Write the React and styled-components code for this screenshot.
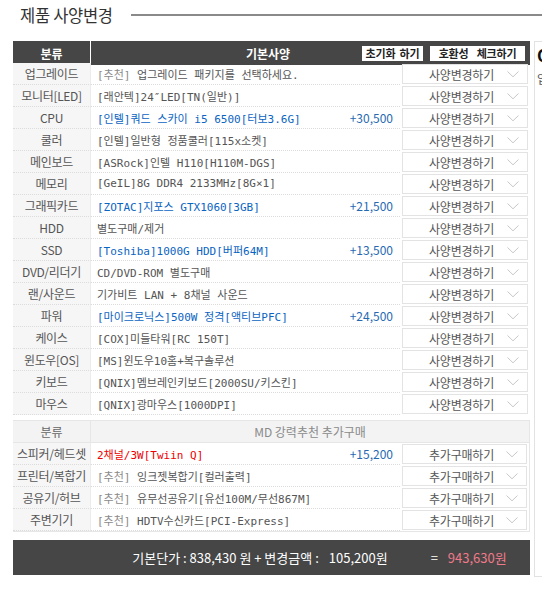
import styled, { createGlobalStyle } from "styled-components";

const GlobalStyle = createGlobalStyle`
    html, body {
        margin: 0;
        padding: 0;
        background: #fff;
        overflow: hidden;
    }
    body {
        font-family: "Noto Sans CJK KR", "Noto Sans", sans-serif;
        font-size: 12px;
        color: #555;
    }
`;

const specs = [
    { label: '업그레이드', rec: true, text: '업그레이드 패키지를 선택하세요.' },
    { label: '모니터[LED]', text: '[래안텍]24″LED[TN(일반)]' },
    { label: 'CPU', text: '[인텔]쿼드 스카이 i5 6500[터보3.6G]', tone: 'blue', price: '+30,500' },
    { label: '쿨러', text: '[인텔]일반형 정품쿨러[115x소켓]' },
    { label: '메인보드', text: '[ASRock]인텔 H110[H110M-DGS]' },
    { label: '메모리', text: '[GeIL]8G DDR4 2133MHz[8G×1]' },
    { label: '그래픽카드', text: '[ZOTAC]지포스 GTX1060[3GB]', tone: 'blue', price: '+21,500' },
    { label: 'HDD', text: '별도구매/제거' },
    { label: 'SSD', text: '[Toshiba]1000G HDD[버퍼64M]', tone: 'blue', price: '+13,500' },
    { label: 'DVD/리더기', text: 'CD/DVD-ROM 별도구매' },
    { label: '랜/사운드', text: '기가비트 LAN + 8채널 사운드' },
    { label: '파워', text: '[마이크로닉스]500W 정격[액티브PFC]', tone: 'blue', price: '+24,500' },
    { label: '케이스', text: '[COX]미들타워[RC 150T]' },
    { label: '윈도우[OS]', text: '[MS]윈도우10홈+복구솔루션' },
    { label: '키보드', text: '[QNIX]멤브레인키보드[2000SU/키스킨]' },
    { label: '마우스', text: '[QNIX]광마우스[1000DPI]' },
];

const extras = [
    { label: '스피커/헤드셋', text: '2채널/3W[Twiin Q]', tone: 'red', price: '+15,200' },
    { label: '프린터/복합기', rec: true, text: '잉크젯복합기[컬러출력]' },
    { label: '공유기/허브', rec: true, text: '유무선공유기[유선100M/무선867M]' },
    { label: '주변기기', rec: true, text: 'HDTV수신카드[PCI-Express]' },
];

const Chevron = () => (
    <svg width="12" height="7" viewBox="0 0 12 7" fill="none">
        <path d="M0.5 0.5 L6 5.8 L11.5 0.5" stroke="#c8c8c8" strokeWidth="1" />
    </svg>
);

const Row = ({ item, action }) => (
    <>
        <LabelCell>{item.label}</LabelCell>
        <SpecCell>
            <SpecText $tone={item.tone}>
                {item.rec && <Rec>[추천] </Rec>}
                {item.text}
            </SpecText>
            {item.price && <Price>{item.price}</Price>}
        </SpecCell>
        <SelectCell>
            <SelectBox>
                <span>{action}</span>
                <Chevron />
            </SelectBox>
        </SelectCell>
    </>
);

export default function App() {
    return (
        <Page>
            <GlobalStyle />
            <Main>
                <TitleBar>
                    <Title>제품 사양변경</Title>
                    <TitleLine />
                </TitleBar>
                <Table>
                    <HeadCell>분류</HeadCell>
                    <HeadMain>
                        <HeadTitle>기본사양</HeadTitle>
                        <HeadButton $w={61}>초기화 하기</HeadButton>
                        <HeadButton $w={95} $wide>호환성 체크하기</HeadButton>
                    </HeadMain>
                    {specs.map((s) => (
                        <Row key={s.label} item={s} action="사양변경하기" />
                    ))}
                </Table>
                <ExtraTable>
                    <SubHead>분류</SubHead>
                    <SubHeadMain>MD 강력추천 추가구매</SubHeadMain>
                    {extras.map((s) => (
                        <Row key={s.label} item={s} action="추가구매하기" />
                    ))}
                </ExtraTable>
                <Footer>
                    <span>기본단가 : 838,430 원 + 변경금액 :</span>
                    <FooterNum>105,200원</FooterNum>
                    <FooterEq>=</FooterEq>
                    <FooterTotal>943,630원</FooterTotal>
                </Footer>
            </Main>
            <SidePanel>
                <SideBig>Q</SideBig>
                <SideSmall>입</SideSmall>
            </SidePanel>
        </Page>
    );
}

const Page = styled.div`
    display: flex;
    width: 542px;
    height: 593px;
    overflow: hidden;
`;
const Main = styled.div`
    width: 517px;
    flex: none;
    padding-left: 13px;
`;
const TitleBar = styled.div`
    display: flex;
    align-items: center;
    height: 30px;
    margin-bottom: 11px;
    width: 529px;
`;
const Title = styled.h2`
    margin: 0 0 0 7px;
    font-size: 16.5px;
    font-weight: normal;
    color: #333;
    letter-spacing: -0.3px;
    white-space: nowrap;
`;
const TitleLine = styled.div`
    flex: 1;
    height: 2px;
    background: #8a8a8a;
    margin-left: 18px;
`;
const Table = styled.div`
    display: grid;
    grid-template-columns: 78px 309px 130px;
    grid-auto-rows: 22px;
`;
const HeadCell = styled.div`
    height: 24px;
    background: #464646;
    color: #fff;
    font-weight: bold;
    display: flex;
    align-items: center;
    justify-content: center;
    border-right: 1px solid #fff;
`;
const HeadMain = styled.div`
    grid-column: 2 / 4;
    height: 24px;
    background: #464646;
    display: flex;
    align-items: center;
    gap: 7px;
    padding-right: 5px;
`;
const HeadTitle = styled.div`
    flex: 1;
    color: #fff;
    font-weight: bold;
    text-align: center;
    padding-left: 90px;
`;
const HeadButton = styled.button`
    width: ${(p) => p.$w}px;
    height: 15px;
    padding: 0;
    border: none;
    border-radius: 0;
    background: #fff;
    color: #222;
    font-family: inherit;
    font-size: 11px;
    font-weight: bold;
    line-height: 15px;
    letter-spacing: -0.2px;
    word-spacing: ${(p) => (p.$wide ? 6 : 2)}px;
    white-space: nowrap;
    overflow: hidden;
`;
const LabelCell = styled.div`
    background: #f6f6f6;
    border-right: 1px solid #ececec;
    border-bottom: 1px dotted #dcdcdc;
    display: flex;
    align-items: center;
    justify-content: center;
    white-space: nowrap;
    color: #555;
    letter-spacing: -0.3px;
`;
const SpecCell = styled.div`
    display: flex;
    align-items: center;
    justify-content: space-between;
    padding: 0 7px 0 6px;
    border-bottom: 1px dotted #dcdcdc;
    white-space: nowrap;
    overflow: hidden;
`;
const toneColor = { blue: '#0a64c2', red: '#ee0000' };
const SpecText = styled.span`
    font-family: "DejaVu Sans Mono", "Noto Sans CJK KR", monospace;
    font-size: 11px;
    color: ${(p) => toneColor[p.$tone] || '#555'};
`;
const Rec = styled.span`
    color: #8a8a8a;
`;
const Price = styled.span`
    color: #2669b3;
`;
const SelectCell = styled.div`
    padding: 1px 2px 1px 2px;
`;
const SelectBox = styled.div`
    height: 18px;
    border: 1px solid #e3e3e3;
    background: #fff;
    display: flex;
    align-items: center;
    justify-content: space-between;
    padding: 0 8px 0 26px;
    color: #555;
    span { letter-spacing: -0.2px; }
`;
const ExtraTable = styled(Table)`
    margin-top: 5px;
    border: 1px solid #e6e6e6;
    border-left: none;
    width: 516px;
    grid-template-columns: 78px 309px 129px;
`;
const SubHead = styled.div`
    background: #f3f3f3;
    border-right: 1px solid #e6e6e6;
    border-bottom: 1px solid #e6e6e6;
    display: flex;
    align-items: center;
    justify-content: center;
    color: #666;
`;
const SubHeadMain = styled.div`
    grid-column: 2 / 4;
    background: #f3f3f3;
    border-bottom: 1px solid #e6e6e6;
    display: flex;
    align-items: center;
    justify-content: center;
    color: #8a8a8a;
`;
const Footer = styled.div`
    margin-top: 8px;
    height: 35px;
    background: #464646;
    color: #fff;
    font-size: 13px;
    display: flex;
    align-items: center;
    justify-content: center;
    white-space: nowrap;
    padding-left: 96px;
    box-sizing: border-box;
`;
const FooterNum = styled.span`
    margin-left: 10px;
`;
const FooterEq = styled.span`
    margin-left: 43px;
`;
const FooterTotal = styled.span`
    margin-left: 10px;
    color: #f07a8a;
`;
const SidePanel = styled.div`
    margin: 41px 0 0 4px;
    height: 536px;
    width: 40px;
    flex: none;
    border: 1px solid #e2e2e2;
    padding: 4px 0 0 2px;
    box-sizing: border-box;
`;
const SideBig = styled.div`
    font-size: 17px;
    font-weight: bold;
    color: #111;
    line-height: 18px;
`;
const SideSmall = styled.div`
    margin-top: 6px;
    font-size: 12px;
    color: #555;
`;
